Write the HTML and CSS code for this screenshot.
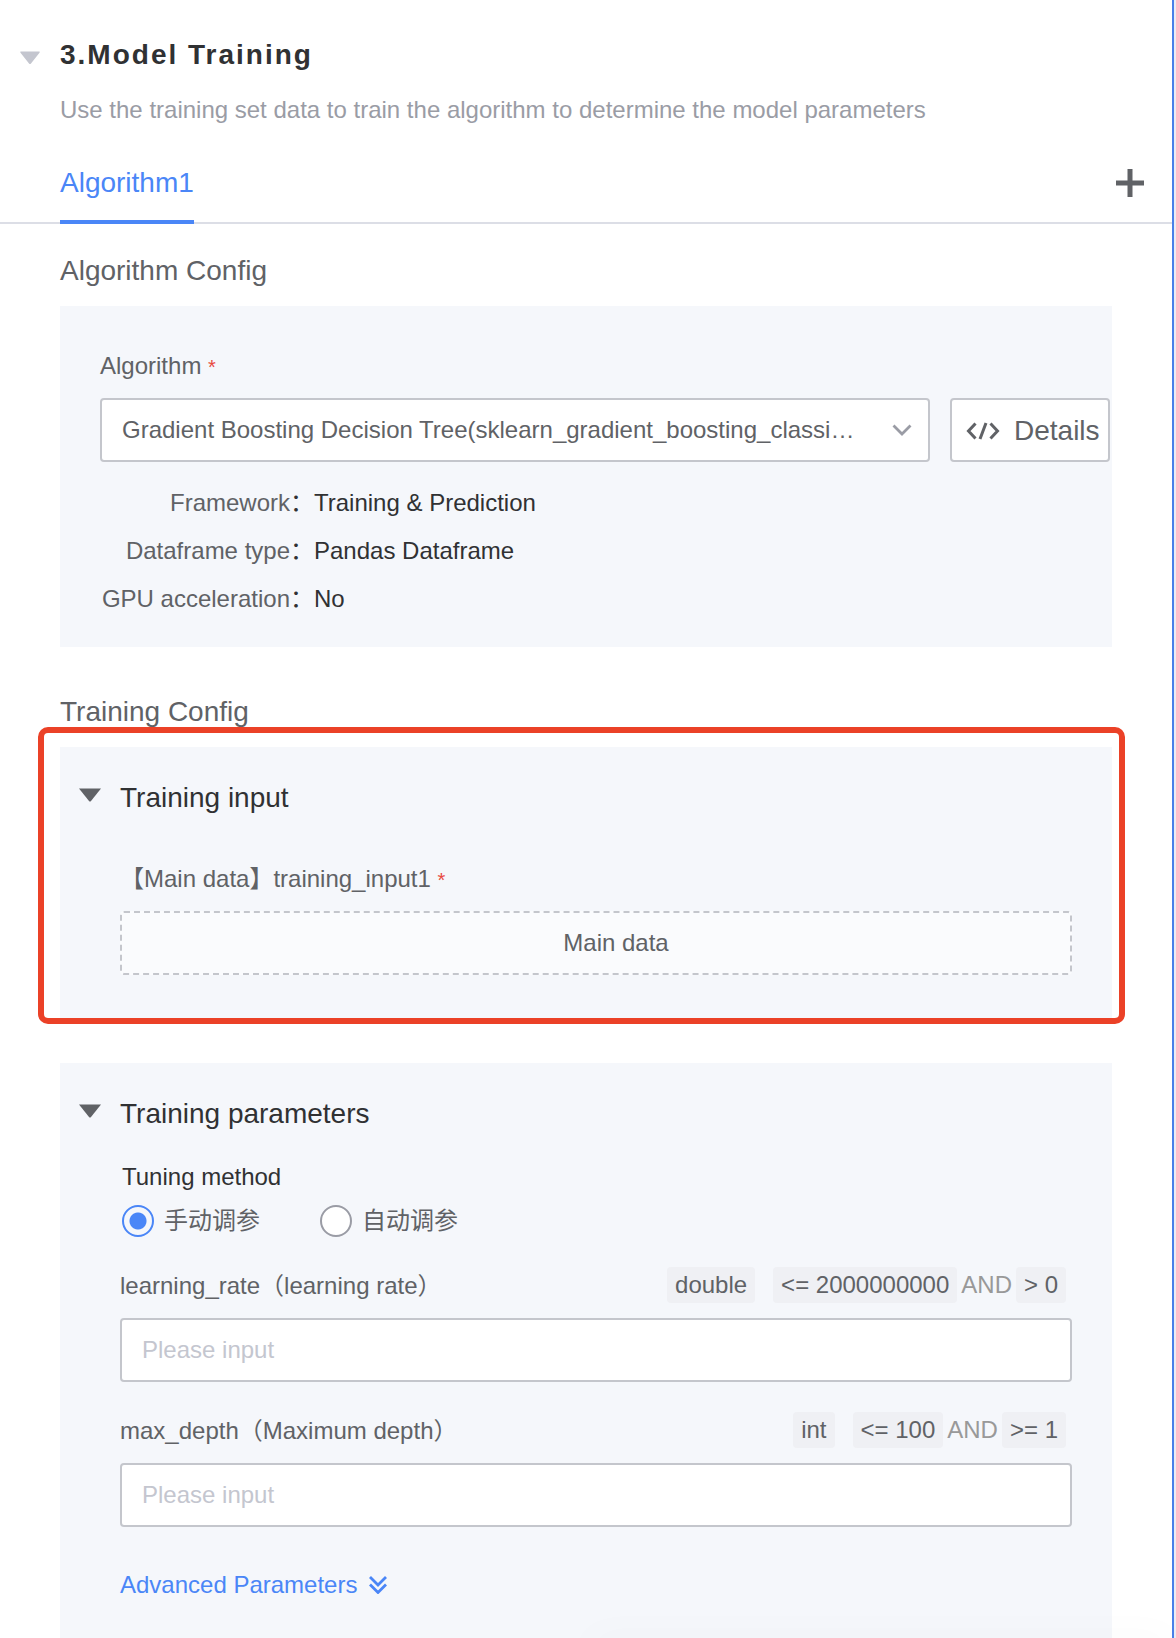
FILE: index.html
```html
<!DOCTYPE html>
<html lang="en">
<head>
<meta charset="utf-8">
<title>Model Training</title>
<link rel="stylesheet" href="styles.css">
</head>
<body>
<main class="page">
  <header class="step">
    <button class="caret caret-light" type="button" aria-label="Collapse Model Training">
      <svg width="22" height="14" viewBox="0 0 22 14"><path d="M2 .5h18q1.500 0 .5 1.200L12 12.500q-1 1-2 0L1.500 1.700Q.5.5 2 .5z"/></svg>
    </button>
    <div class="step-text">
      <h1 class="step-title">3.Model Training</h1>
      <p class="step-note">Use the training set data to train the algorithm to determine the model parameters</p>
    </div>
  </header>

  <nav class="tabs">
    <a class="tab" href="#algorithm1">Algorithm1</a>
    <button class="add" type="button" aria-label="Add algorithm">
      <svg width="28" height="28" viewBox="0 0 28 28"><path d="M14 0v28M0 14h28" fill="none" stroke="currentColor" stroke-width="5"/></svg>
    </button>
  </nav>

  <section class="section" id="algorithm1">
    <h2 class="section-title">Algorithm Config</h2>
    <div class="panel algorithm">
      <label class="label" for="algorithm">Algorithm <span class="required">*</span></label>
      <div class="picker">
        <div class="select-wrap">
          <select class="select" id="algorithm">
            <option>Gradient Boosting Decision Tree(sklearn_gradient_boosting_classifier)</option>
          </select>
          <svg class="select-arrow" width="20" height="12" viewBox="0 0 20 12"><path d="M1.500 1.500 10 10l8.500-8.500" fill="none" stroke="currentColor" stroke-width="2.800"/></svg>
        </div>
        <button class="details" type="button">
          <svg width="34" height="20" viewBox="0 0 34 20"><path d="M9.500 2.500 2.500 10l7 7.500M24.500 2.500l7 7.500-7 7.500M20 2 14 18" fill="none" stroke="currentColor" stroke-width="3"/></svg>
          Details
        </button>
      </div>
      <dl class="facts">
        <dt>Framework<span class="colon">：</span></dt><dd>Training &amp; Prediction</dd>
        <dt>Dataframe type<span class="colon">：</span></dt><dd>Pandas Dataframe</dd>
        <dt>GPU acceleration<span class="colon">：</span></dt><dd>No</dd>
      </dl>
    </div>
  </section>

  <section class="section training">
    <h2 class="section-title">Training Config</h2>
    <div class="panel group highlighted">
      <div class="group-head">
        <button class="caret" type="button" aria-label="Collapse Training input">
          <svg width="22" height="14" viewBox="0 0 22 14"><path d="M0 .5h22L12 13q-1 1-2 0z"/></svg>
        </button>
        <h3 class="group-title">Training input</h3>
      </div>
      <div class="group-body input-body">
        <p class="label">【Main data】training_input1 <span class="required">*</span></p>
        <div class="dropzone">Main data</div>
      </div>
    </div>

    <div class="panel group">
      <div class="group-head">
        <button class="caret" type="button" aria-label="Collapse Training parameters">
          <svg width="22" height="14" viewBox="0 0 22 14"><path d="M0 .5h22L12 13q-1 1-2 0z"/></svg>
        </button>
        <h3 class="group-title">Training parameters</h3>
      </div>
      <div class="group-body">
        <fieldset class="tuning">
          <legend>Tuning method</legend>
          <div class="radios">
            <label class="radio"><input type="radio" name="tuning" checked>手动调参</label>
            <label class="radio"><input type="radio" name="tuning">自动调参</label>
          </div>
        </fieldset>

        <div class="field">
          <div class="field-head">
            <label for="rate">learning_rate（learning rate）</label>
            <div class="rules"><span class="tag type">double</span><span class="tag">&lt;= 2000000000</span><span class="and">AND</span><span class="tag">&gt; 0</span></div>
          </div>
          <input class="input" id="rate" type="text" placeholder="Please input">
        </div>

        <div class="field">
          <div class="field-head">
            <label for="depth">max_depth（Maximum depth）</label>
            <div class="rules"><span class="tag type">int</span><span class="tag">&lt;= 100</span><span class="and">AND</span><span class="tag">&gt;= 1</span></div>
          </div>
          <input class="input" id="depth" type="text" placeholder="Please input">
        </div>

        <a class="advanced" href="#advanced">Advanced Parameters
          <svg width="18" height="18" viewBox="0 0 18 18"><path d="M1 1l8 8 8-8M1 8.500l8 8 8-8" fill="none" stroke="currentColor" stroke-width="2.800"/></svg>
        </a>
      </div>
    </div>
  </section>
</main>
</body>
</html>
```

FILE: styles.css
```css
* { box-sizing: border-box; }

body {
  margin: 0;
  background: #ebedf5;
  color: #606266;
  font: 24px/32px "Liberation Sans", "Noto Sans CJK SC", sans-serif;
}

h1, h2, h3, p, dl, dd, fieldset, legend { margin: 0; padding: 0; }
button, input, select { font: inherit; color: inherit; }
svg { display: block; flex: none; }

.page {
  min-height: 100vh;
  margin-right: 2px;
  border-right: 2px solid #4a80e8;
  background: #fff;
}

.page::after {
  content: "";
  position: fixed;
  right: 4px;
  bottom: -20px;
  left: 50%;
  height: 20px;
  box-shadow: 0 0 40px rgba(0, 0, 0, 0.03);
  pointer-events: none;
}

.caret {
  padding: 0;
  border: 0;
  background: none;
  color: #606266;
}
.caret svg { fill: currentColor; }
.caret-light { color: #c4c6cf; margin-top: 12px; }

/* Step heading */
.step {
  display: flex;
  align-items: flex-start;
  gap: 19px;
  padding: 39px 60px 0 19px;
}
.step-title {
  color: #303133;
  font-size: 28px;
  line-height: 32px;
  letter-spacing: 2px;
}
.step-note {
  margin-top: 23px;
  color: #9a9ca5;
}

/* Algorithm tabs */
.tabs {
  display: flex;
  justify-content: space-between;
  align-items: stretch;
  height: 98px;
  padding: 0 28px 0 60px;
  border-bottom: 2px solid #dcdee6;
}
.tab {
  margin-bottom: -2px;
  padding-top: 41px;
  border-bottom: 4px solid #4a86f7;
  color: #4a86f7;
  font-size: 28px;
  text-decoration: none;
}
.add {
  padding: 18px 0 0;
  border: 0;
  background: none;
}

/* Sections and panels */
.section { padding: 31px 60px 0; }
.training { padding-top: 49px; }
.section-title {
  font-size: 28px;
  font-weight: 400;
  line-height: 32px;
}
.panel {
  margin-top: 19px;
  background: #f5f7fb;
}
.label { display: block; }
.required { color: #e8493f; font-size: 20px; }

.algorithm { padding: 44px 2px 24px 40px; }
.picker {
  display: flex;
  gap: 20px;
  margin-top: 15px;
}
.select-wrap {
  flex: 1;
  display: grid;
  align-items: center;
  min-width: 0;
}
.select, .select-arrow { grid-area: 1 / 1; }
.select {
  width: 100%;
  height: 64px;
  padding: 0 72px 0 20px;
  appearance: none;
  border: 2px solid #c4c6cc;
  border-radius: 4px;
  background: #fff;
  text-overflow: ellipsis;
}
.select-arrow {
  justify-self: end;
  margin-right: 18px;
  color: #9a9ca5;
  pointer-events: none;
}
.details {
  display: flex;
  align-items: center;
  gap: 14px;
  width: 160px;
  height: 64px;
  padding: 2px 0 0 14px;
  border: 2px solid #c4c6cc;
  border-radius: 4px;
  background: #fff;
  font-size: 28px;
}

.facts {
  display: grid;
  grid-template-columns: 214px 1fr;
  grid-auto-rows: 48px;
  margin-top: 17px;
  line-height: 48px;
}
.facts dt { text-align: right; white-space: nowrap; }
.facts dd { color: #303133; }
.colon { color: #303133; }

/* Collapsible groups */
.group {
  padding: 35px 40px 44px 19px;
}
.group + .group { margin-top: 44px; }
.group-head {
  display: flex;
  align-items: flex-start;
  gap: 19px;
}
.group-head .caret { margin-top: 6px; }
.group-title {
  color: #303133;
  font-size: 28px;
  font-weight: 400;
}
.group-body { padding-left: 41px; }

/* Callout frame drawn over the group */
.highlighted { position: relative; }
.highlighted::before {
  content: "";
  position: absolute;
  inset: -20px -13px -5px -22px;
  border: 6px solid #eb4127;
  border-radius: 10px;
  pointer-events: none;
}
.input-body { padding-top: 49px; }
.dropzone {
  height: 64px;
  margin-top: 15px;
  padding-left: 40px;
  border: 2px dashed #c4c6cc;
  border-radius: 4px;
  background: #fafbfd;
  line-height: 60px;
  text-align: center;
}

/* Training parameters */
.tuning {
  min-width: 0;
  margin-top: 31px;
  padding-left: 2px;
  border: 0;
}
.tuning legend { color: #303133; }
.radios {
  display: flex;
  gap: 60px;
  margin-top: 12px;
}
.radio {
  display: flex;
  align-items: center;
  gap: 10px;
}
.radio input {
  width: 32px;
  height: 32px;
  margin: 0;
  appearance: none;
  border: 2px solid #9a9ca5;
  border-radius: 50%;
  background: #fff;
}
.radio input:checked {
  border-color: #4a86f7;
  background: radial-gradient(circle, #4a86f7 8px, #f5f7fb 9px);
}

.field { margin-top: 30px; }
.field-head {
  display: flex;
  justify-content: space-between;
  align-items: center;
  height: 36px;
  padding-right: 6px;
}
.field-head label { padding-top: 2px; }
.rules { display: flex; line-height: 36px; }
.tag {
  padding: 0 8px;
  border-radius: 4px;
  background: #eff0f4;
}
.type { margin-right: 18px; }
.and { margin: 0 4px; color: #999; }
.input {
  display: block;
  width: 100%;
  height: 64px;
  margin-top: 15px;
  padding: 0 20px;
  border: 2px solid #c4c6cc;
  border-radius: 4px;
  background: #fff;
}
.input::placeholder { color: #c4c6cf; opacity: 1; }
.advanced {
  display: inline-flex;
  align-items: center;
  gap: 12px;
  margin-top: 42px;
  color: #4a86f7;
  text-decoration: none;
}
```
